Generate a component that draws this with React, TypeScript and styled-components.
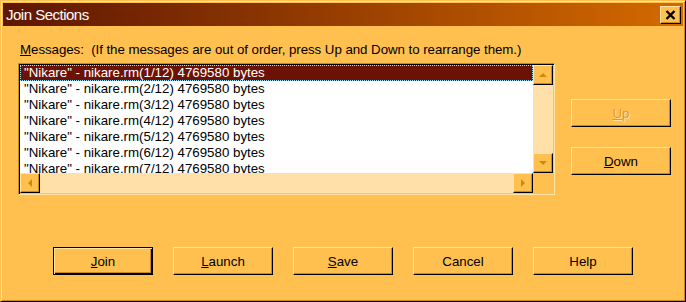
import React from 'react'
import styled, { createGlobalStyle, css } from 'styled-components';

const FACE = '#ffc050';
const LIGHT = '#ffe4a8';
const SHADOW = '#c88a20';
const TRACK = '#ffe0a8';
const ARROW = '#d08a00';

const GlobalStyle = createGlobalStyle`
  html, body {
    margin: 0;
    padding: 0;
    background: ${FACE};
  }
  body {
    font-family: "Liberation Sans", Arial, sans-serif;
    font-size: 13.3px;
  }
`;

const items = [1, 2, 3, 4, 5, 6, 7].map(n => `"Nikare" - nikare.rm(${n}/12) 4769580 bytes`);

const bottomButtons = [
    { label: 'Join', key: 'J', isDefault: true },
    { label: 'Launch', key: 'L' },
    { label: 'Save', key: 'S' },
    { label: 'Cancel' },
    { label: 'Help' },
];

const Mnemonic: React.FC<{ text: string; letter?: string }> = ({ text, letter }) => {
    if (!letter) return <>{text}</>;
    const i = text.indexOf(letter);
    return <>{text.slice(0, i)}<u>{text[i]}</u>{text.slice(i + 1)}</>;
}

const Arrow: React.FC<{ dir: 'up' | 'down' | 'left' | 'right' }> = ({ dir }) => {
    const pts = {
        up: '1,6 5,2 9,6',
        down: '1,2 5,6 9,2',
        left: '6,1 2,5 6,9',
        right: '2,1 6,5 2,9',
    }[dir];
    const vertical = dir === 'up' || dir === 'down';
    return (
        <svg width={vertical ? 10 : 8} height={vertical ? 8 : 10} viewBox={vertical ? '0 0 10 8' : '0 0 8 10'}>
            <polygon points={pts} fill={ARROW} />
        </svg>
    );
}

const App: React.FC = () => {
    return (
        <>
            <GlobalStyle />
            <Window>
                <TitleBar>
                    <Title>Join Sections</Title>
                    <CloseButton>
                        <svg width="11" height="10" viewBox="0 0 11 10">
                            <path d="M1.5 1 L9.5 9 M9.5 1 L1.5 9" stroke="#000" strokeWidth="2.4" />
                        </svg>
                    </CloseButton>
                </TitleBar>
                <Body>
                    <Main>
                        <LeftColumn>
                            <Label><u>M</u>essages:&nbsp; (If the messages are out of order, press Up and Down to rearrange them.)</Label>
                            <ListFrame>
                                <ListGrid>
                                    <Items>
                                        {items.map((text, i) => (
                                            <Row key={i} selected={i === 0}>{text}</Row>
                                        ))}
                                    </Items>
                                    <VScroll>
                                        <ScrollButton><Arrow dir="up" /></ScrollButton>
                                        <Track />
                                        <ScrollButton><Arrow dir="down" /></ScrollButton>
                                    </VScroll>
                                    <HScroll>
                                        <ScrollButton><Arrow dir="left" /></ScrollButton>
                                        <Track />
                                        <ScrollButton><Arrow dir="right" /></ScrollButton>
                                    </HScroll>
                                    <Corner />
                                </ListGrid>
                            </ListFrame>
                        </LeftColumn>
                        <SideColumn>
                            <Button disabled><Mnemonic text="Up" letter="U" /></Button>
                            <Button><Mnemonic text="Down" letter="D" /></Button>
                        </SideColumn>
                    </Main>
                    <ButtonRow>
                        {bottomButtons.map(b => (
                            <Button key={b.label} isDefault={b.isDefault}>
                                <Mnemonic text={b.label} letter={b.key} />
                            </Button>
                        ))}
                    </ButtonRow>
                </Body>
            </Window>
        </>
    )
}

export default App;


const Window = styled.div`
  width: 686px;
  height: 302px;
  box-sizing: border-box;
  background: ${FACE};
  border: 1px solid;
  border-color: ${FACE} #000 #000 ${FACE};
  box-shadow: inset 1px 1px 0 ${LIGHT}, inset -1px -1px 0 ${SHADOW};
  padding: 2px;
  display: flex;
  flex-direction: column;
`;

const TitleBar = styled.div`
  height: 23px;
  background: linear-gradient(to right, #5e1600, #8c3600 40%, #d46a00);
  display: flex;
  align-items: center;
  justify-content: space-between;
  padding: 0 2px;
`;

const Title = styled.div`
  color: #fff;
  font-size: 15px;
  letter-spacing: -0.5px;
  padding-left: 1px;
`;

const CloseButton = styled.button`
  width: 21px;
  height: 18px;
  padding: 0;
  box-sizing: border-box;
  background: ${FACE};
  border: 1px solid;
  border-color: ${LIGHT} #000 #000 ${LIGHT};
  box-shadow: inset -1px -1px 0 ${SHADOW};
  display: flex;
  align-items: center;
  justify-content: center;
`;

const Body = styled.div`
  flex: 1;
  padding: 16px 0 0 15px;
  display: flex;
  flex-direction: column;
`;

const Main = styled.div`
  display: flex;
  gap: 16px;
`;

const LeftColumn = styled.div`
  width: 537px;
  flex-shrink: 0;
  display: flex;
  flex-direction: column;
  gap: 5px;
`;

const Label = styled.div`
  height: 16px;
  line-height: 16px;
  padding-left: 2px;
  color: #000;
  white-space: nowrap;
  letter-spacing: -0.05px;
`;

const ListFrame = styled.div`
  height: 132px;
  box-sizing: border-box;
  border: 1px solid;
  border-color: ${SHADOW} ${LIGHT} ${LIGHT} ${SHADOW};
  box-shadow: inset 1px 1px 0 #000, inset -1px -1px 0 ${FACE};
  padding: 1px;
`;

const ListGrid = styled.div`
  height: 100%;
  display: grid;
  grid-template-columns: 1fr 20px;
  grid-template-rows: 1fr 20px;
`;

const Items = styled.div`
  background: #fff;
  overflow: hidden;
`;

const Row = styled.div<{ selected?: boolean }>`
  height: 16px;
  line-height: 16px;
  padding-left: 4px;
  white-space: nowrap;
  color: #000;
  box-sizing: border-box;
  ${p => p.selected && css`
    background: #6b1204;
    color: #fff;
    outline: 1px dotted #9fe0ff;
    outline-offset: -1px;
  `}
`;

const VScroll = styled.div`
  display: flex;
  flex-direction: column;
  background: ${TRACK};
`;

const HScroll = styled.div`
  display: flex;
  background: ${TRACK};
`;

const Track = styled.div`
  flex: 1;
`;

const Corner = styled.div`
  background: ${FACE};
`;

const ScrollButton = styled.div`
  width: 20px;
  height: 20px;
  box-sizing: border-box;
  background: ${FACE};
  border: 1px solid;
  border-color: ${LIGHT} #000 #000 ${LIGHT};
  box-shadow: inset -1px -1px 0 ${SHADOW};
  display: flex;
  align-items: center;
  justify-content: center;
`;

const SideColumn = styled.div`
  flex-shrink: 0;
  padding-top: 57px;
  display: flex;
  flex-direction: column;
  gap: 20px;
`;

const Button = styled.button<{ isDefault?: boolean }>`
  width: 100px;
  height: 28px;
  box-sizing: border-box;
  padding: 0;
  background: ${FACE};
  font-family: "Liberation Sans", Arial, sans-serif;
  font-size: 13.3px;
  color: #000;
  border: 1px solid;
  border-color: ${LIGHT} #000 #000 ${LIGHT};
  box-shadow: inset -1px -1px 0 ${SHADOW};
  ${p => p.isDefault && css`
    border: 1px solid #000;
    box-shadow: inset 1px 1px 0 ${LIGHT}, inset -1px -1px 0 #000, inset -2px -2px 0 ${SHADOW};
  `}
  &:disabled {
    color: #dc9a28;
    text-shadow: 1px 1px 0 ${LIGHT};
  }
`;

const ButtonRow = styled.div`
  margin-top: 52px;
  padding-left: 35px;
  display: flex;
  gap: 20px;
`;
